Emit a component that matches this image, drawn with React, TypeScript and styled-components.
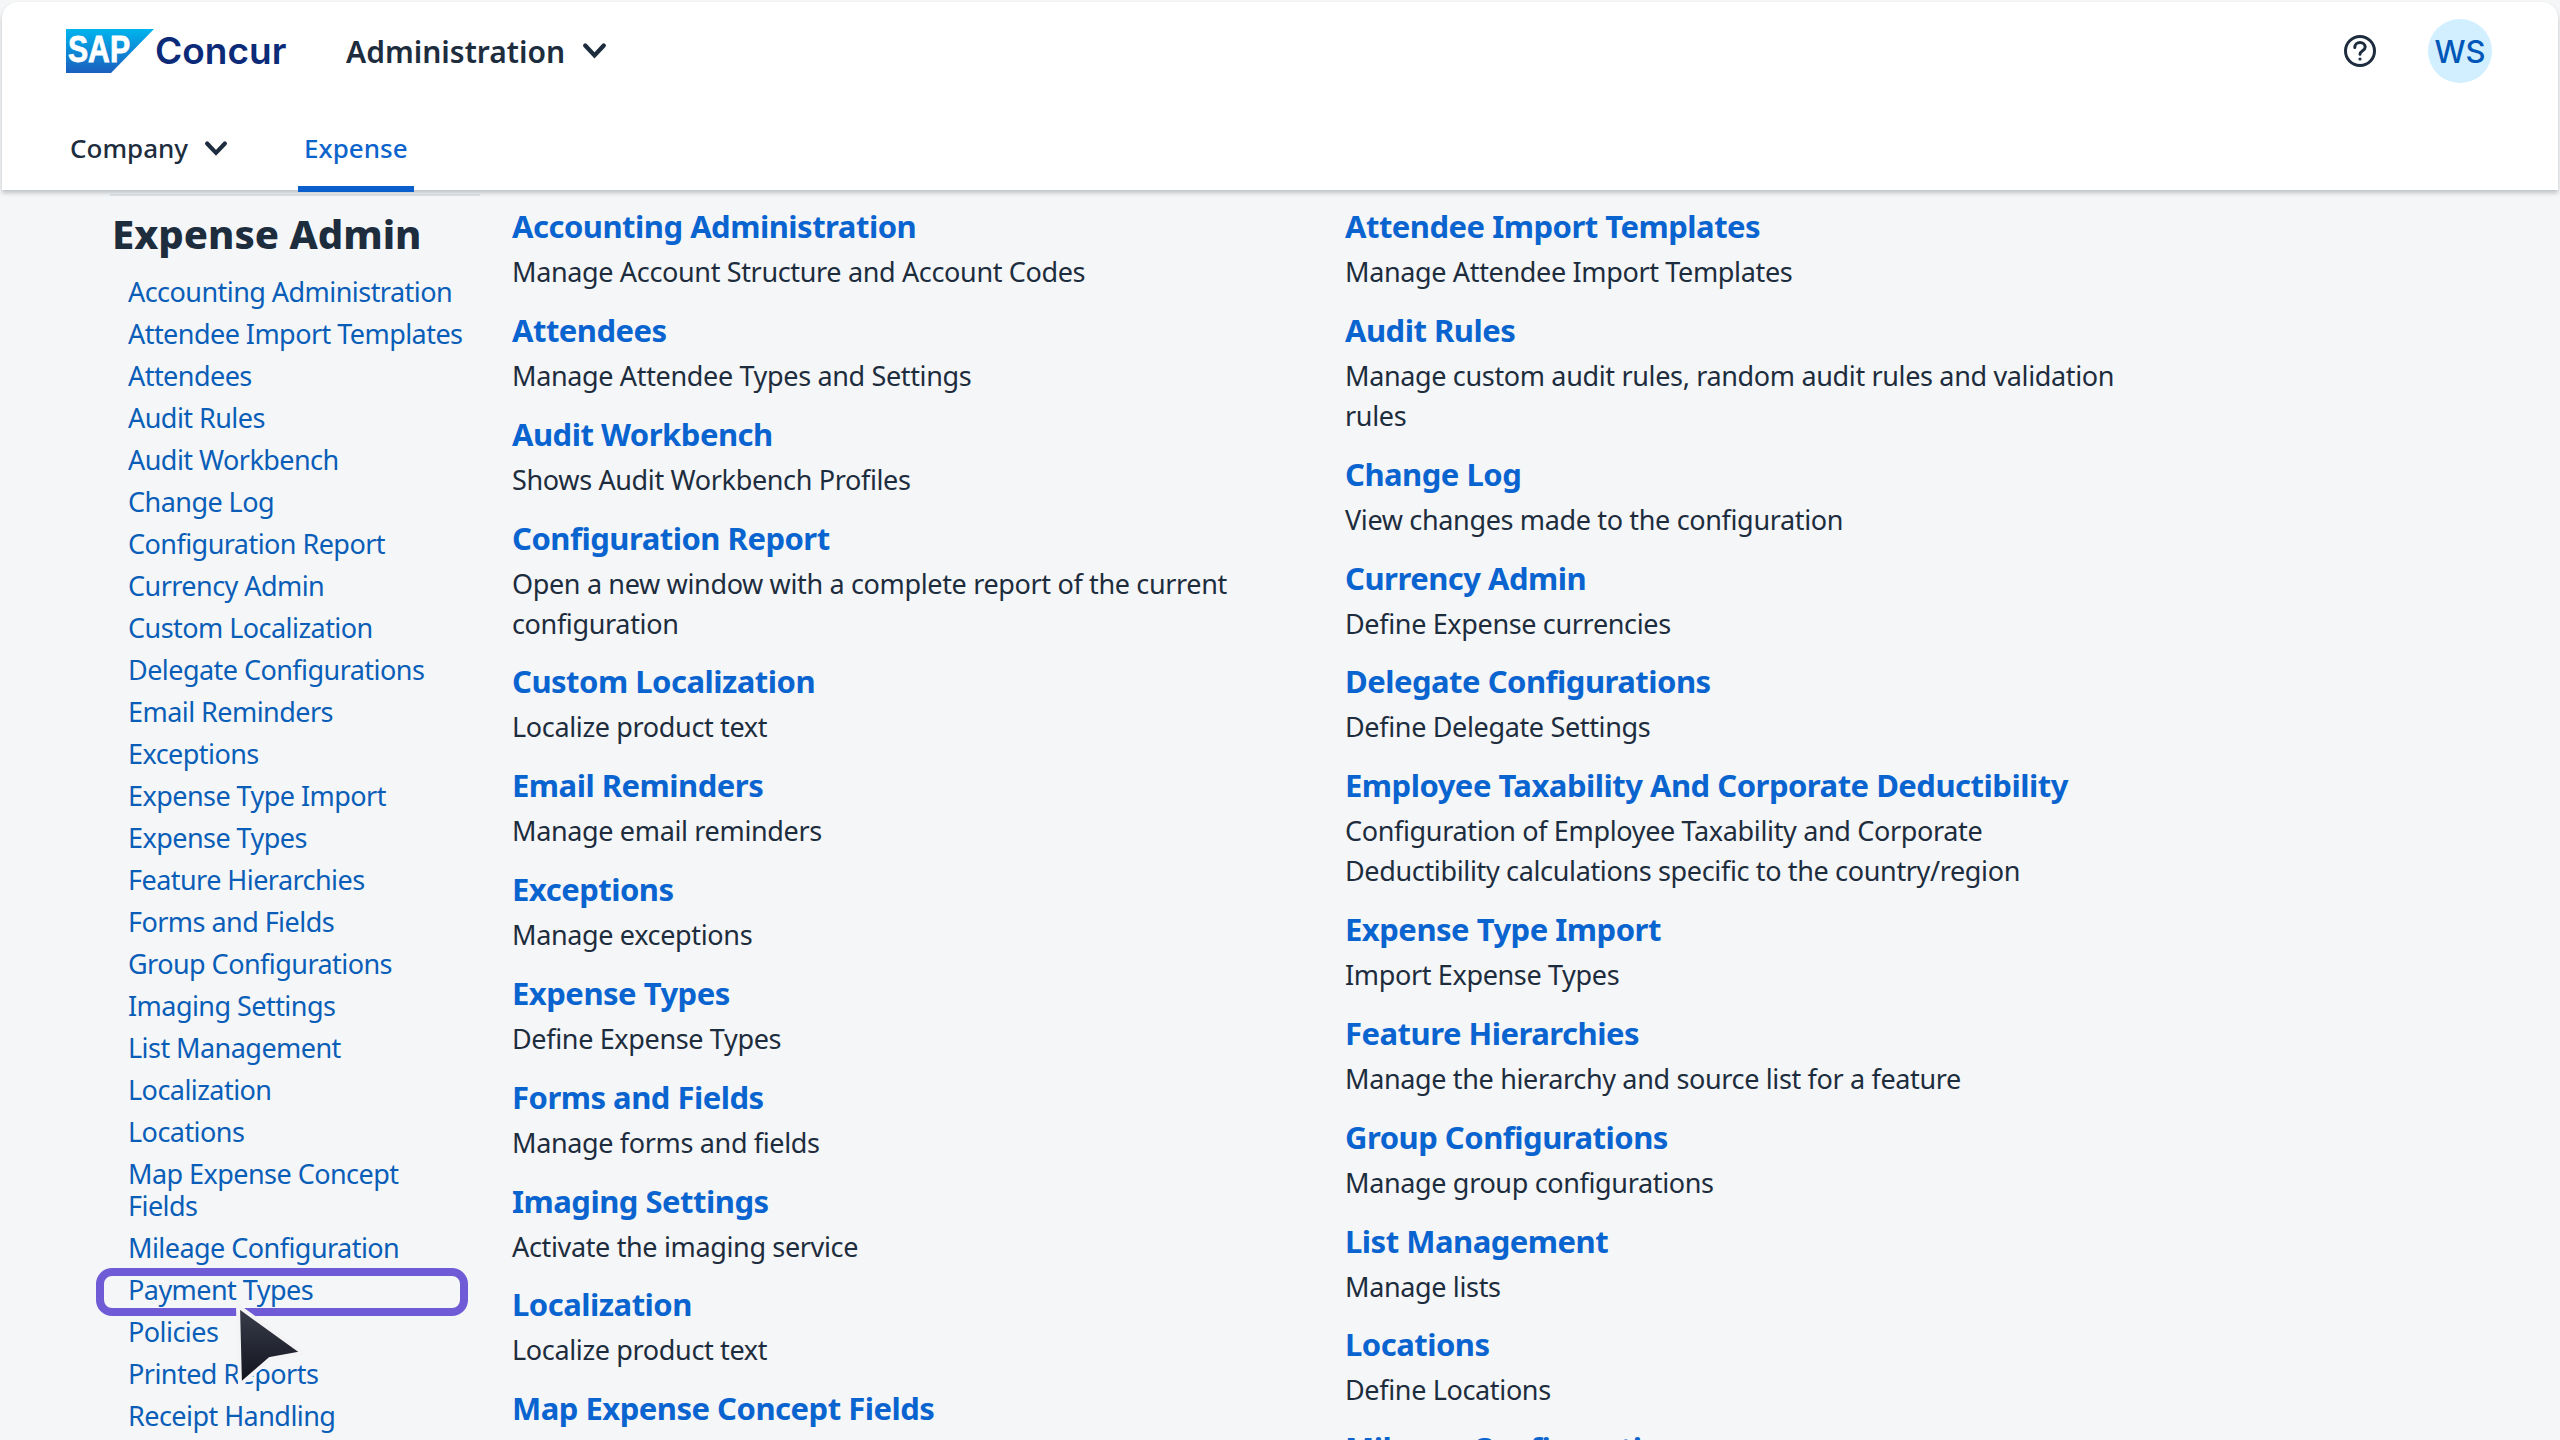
import styled, { createGlobalStyle } from 'styled-components'

const GlobalStyle = createGlobalStyle`
  html, body {
    margin: 0;
    padding: 0;
    background: #f5f6f7;
    font-family: "Noto Sans", "Open Sans", sans-serif;
    color: #1d2d3e;
  }
`

const Page = styled.div`
  position: relative;
  width: 2560px;
  height: 1440px;
  overflow: hidden;
  background: #f5f6f7;
`

const Header = styled.header`
  position: relative;
  z-index: 1;
  height: 188px;
  margin: 2px 2px 0;
  background: #fff;
  border-radius: 16px 16px 0 0;
  box-shadow: 0 3px 4px rgba(90, 100, 110, 0.35);
  display: flex;
  flex-direction: column;
`

const TopBar = styled.div`
  display: flex;
  align-items: center;
  height: 98px;
  padding: 0 66px 0 64px;
`

const Brand = styled.div`
  display: flex;
  align-items: center;
  gap: 1px;
  width: 280px;
`

const BrandName = styled.span`
  font-family: "Inter", sans-serif;
  font-size: 37px;
  font-weight: 600;
  color: #0b2a78;
  line-height: 44px;
`

const AppSwitch = styled.div`
  display: flex;
  align-items: center;
  gap: 17px;
  font-size: 30px;
  font-weight: 600;
`

const Spacer = styled.div`
  flex: 1;
`

const Avatar = styled.div`
  width: 64px;
  height: 64px;
  margin-left: 51px;
  border-radius: 50%;
  background: #d1efff;
  color: #0057b8;
  font-family: "Inter", sans-serif;
  font-size: 31px;
  font-weight: 500;
  display: flex;
  align-items: center;
  justify-content: center;
`

const TabBar = styled.nav`
  display: flex;
  align-items: stretch;
  height: 90px;
  padding-left: 62px;
`

const Tab = styled.div<{ $active?: boolean }>`
  display: flex;
  align-items: center;
  gap: 16px;
  padding: 10px 6px 0;
  margin: 0 64px -2px 0;
  font-size: 26px;
  font-weight: 500;
  color: ${p => (p.$active ? '#0b64cc' : '#1d2d3e')};
  border-bottom: 6px solid ${p => (p.$active ? '#0b5fcc' : 'transparent')};
`

const Body = styled.div`
  display: grid;
  grid-template-columns: 430px 833px 790px;
  padding-left: 82px;
`

const Sidebar = styled.aside`
  margin-top: 4px;
`

const SidebarTitle = styled.h2`
  margin: 0 32px 18px 28px;
  padding: 14px 0 0 2px;
  border-top: 2px solid #e1e4e7;
  font-size: 40px;
  line-height: 48px;
  font-weight: 800;
  white-space: nowrap;
`

const SideList = styled.ul`
  list-style: none;
  margin: 0;
  padding: 0 0 0 46px;
`

const SideItem = styled.li<{ $selected?: boolean }>`
  position: relative;
  width: 345px;
  margin-bottom: 10px;
  font-size: 27px;
  line-height: 32px;
  letter-spacing: -0.55px;
  color: #0a5eb8;

  ${p =>
    p.$selected &&
    `
    &::after {
      content: '';
      position: absolute;
      left: -32px;
      top: -6px;
      width: 372px;
      height: 48px;
      box-sizing: border-box;
      border: 8px solid #6f5bd6;
      border-radius: 16px;
    }
  `}
`

const Column = styled.section`
  padding: 14px 0 0;
`

const Entry = styled.div<{ $textWidth: number }>`
  max-width: ${p => p.$textWidth}px;
  padding-bottom: 15.85px;
`

const EntryTitle = styled.div`
  font-size: 31px;
  line-height: 44px;
  font-weight: 700;
  letter-spacing: -0.5px;
  color: #0a64d0;
  margin-bottom: 4px;
`

const EntryText = styled.div`
  font-size: 27px;
  line-height: 40px;
  letter-spacing: -0.35px;
`

const Cursor = styled.svg`
  position: absolute;
  left: 232px;
  top: 1299px;
  z-index: 2;
`

const sideItems = [
  'Accounting Administration', 'Attendee Import Templates', 'Attendees', 'Audit Rules', 'Audit Workbench',
  'Change Log', 'Configuration Report', 'Currency Admin', 'Custom Localization', 'Delegate Configurations',
  'Email Reminders', 'Exceptions', 'Expense Type Import', 'Expense Types', 'Feature Hierarchies',
  'Forms and Fields', 'Group Configurations', 'Imaging Settings', 'List Management', 'Localization',
  'Locations', 'Map Expense Concept Fields', 'Mileage Configuration', 'Payment Types', 'Policies',
  'Printed Reports', 'Receipt Handling',
]

const leftEntries = [
  ['Accounting Administration', 'Manage Account Structure and Account Codes'],
  ['Attendees', 'Manage Attendee Types and Settings'],
  ['Audit Workbench', 'Shows Audit Workbench Profiles'],
  ['Configuration Report', 'Open a new window with a complete report of the current configuration'],
  ['Custom Localization', 'Localize product text'],
  ['Email Reminders', 'Manage email reminders'],
  ['Exceptions', 'Manage exceptions'],
  ['Expense Types', 'Define Expense Types'],
  ['Forms and Fields', 'Manage forms and fields'],
  ['Imaging Settings', 'Activate the imaging service'],
  ['Localization', 'Localize product text'],
  ['Map Expense Concept Fields', ''],
]

const rightEntries = [
  ['Attendee Import Templates', 'Manage Attendee Import Templates'],
  ['Audit Rules', 'Manage custom audit rules, random audit rules and validation rules'],
  ['Change Log', 'View changes made to the configuration'],
  ['Currency Admin', 'Define Expense currencies'],
  ['Delegate Configurations', 'Define Delegate Settings'],
  ['Employee Taxability And Corporate Deductibility', 'Configuration of Employee Taxability and Corporate Deductibility calculations specific to the country/region'],
  ['Expense Type Import', 'Import Expense Types'],
  ['Feature Hierarchies', 'Manage the hierarchy and source list for a feature'],
  ['Group Configurations', 'Manage group configurations'],
  ['List Management', 'Manage lists'],
  ['Locations', 'Define Locations'],
  ['Mileage Configuration', ''],
]

function Chevron({ width }: { width: number }) {
  return (
    <svg width={width} height={width * 0.7} viewBox="0 0 24 17" fill="none" stroke="#1d2d3e" strokeWidth="4.2" strokeLinecap="round">
      <path d="M3 3.5 12 13 21 3.5" />
    </svg>
  )
}

function SapMark() {
  return (
    <svg width="88" height="44" viewBox="0 0 88 44">
      <defs>
        <linearGradient id="sapFill" x1="0" y1="0" x2="0" y2="1">
          <stop offset="0" stopColor="#00b4ee" />
          <stop offset="1" stopColor="#1b5fbe" />
        </linearGradient>
      </defs>
      <polygon points="0,0 88,0 45,44 0,44" fill="url(#sapFill)" />
      <text x="2" y="33" fontFamily="Liberation Sans" fontWeight="700" fontSize="36" textLength="62" lengthAdjust="spacingAndGlyphs" fill="#fff" stroke="#fff" strokeWidth="0.8">SAP</text>
    </svg>
  )
}

function HelpIcon() {
  return (
    <svg width="34" height="34" viewBox="0 0 34 34" fill="none" stroke="#1d2d3e" strokeWidth="3">
      <circle cx="17" cy="17" r="14.5" />
      <path d="M11.8 13.4c0-3 2.3-4.8 5.2-4.8s5.2 1.8 5.2 4.4c0 3.8-5.2 3.6-5.2 7.2" strokeLinecap="round" />
      <circle cx="17" cy="25" r="1.6" fill="#1d2d3e" stroke="none" />
    </svg>
  )
}

function Entries({ items, textWidth }: { items: string[][]; textWidth: number }) {
  return (
    <Column>
      {items.map(([title, text]) => (
        <Entry key={title} $textWidth={textWidth}>
          <EntryTitle>{title}</EntryTitle>
          {text && <EntryText>{text}</EntryText>}
        </Entry>
      ))}
    </Column>
  )
}

export default function App() {
  return (
    <Page>
      <GlobalStyle />
      <Header>
        <TopBar>
          <Brand>
            <SapMark />
            <BrandName>Concur</BrandName>
          </Brand>
          <AppSwitch>
            Administration
            <Chevron width={25} />
          </AppSwitch>
          <Spacer />
          <HelpIcon />
          <Avatar>WS</Avatar>
        </TopBar>
        <TabBar>
          <Tab>
            Company
            <Chevron width={24} />
          </Tab>
          <Tab $active>Expense</Tab>
        </TabBar>
      </Header>
      <Body>
        <Sidebar>
          <SidebarTitle>Expense Admin</SidebarTitle>
          <SideList>
            {sideItems.map(item => (
              <SideItem key={item} $selected={item === 'Payment Types'}>{item}</SideItem>
            ))}
          </SideList>
        </Sidebar>
        <Entries items={leftEntries} textWidth={733} />
        <Entries items={rightEntries} textWidth={790} />
      </Body>
      <Cursor width="80" height="95" viewBox="0 0 80 95">
        <defs>
          <linearGradient id="cursorFill" x1="0" y1="0" x2="0" y2="1">
            <stop offset="0" stopColor="#3a3d4c" />
            <stop offset="1" stopColor="#10121c" />
          </linearGradient>
        </defs>
        <path d="M6 7 71 54 38 60 8 86Z" fill="url(#cursorFill)" stroke="#f4f4f6" strokeWidth="4" strokeLinejoin="round" />
      </Cursor>
    </Page>
  )
}
